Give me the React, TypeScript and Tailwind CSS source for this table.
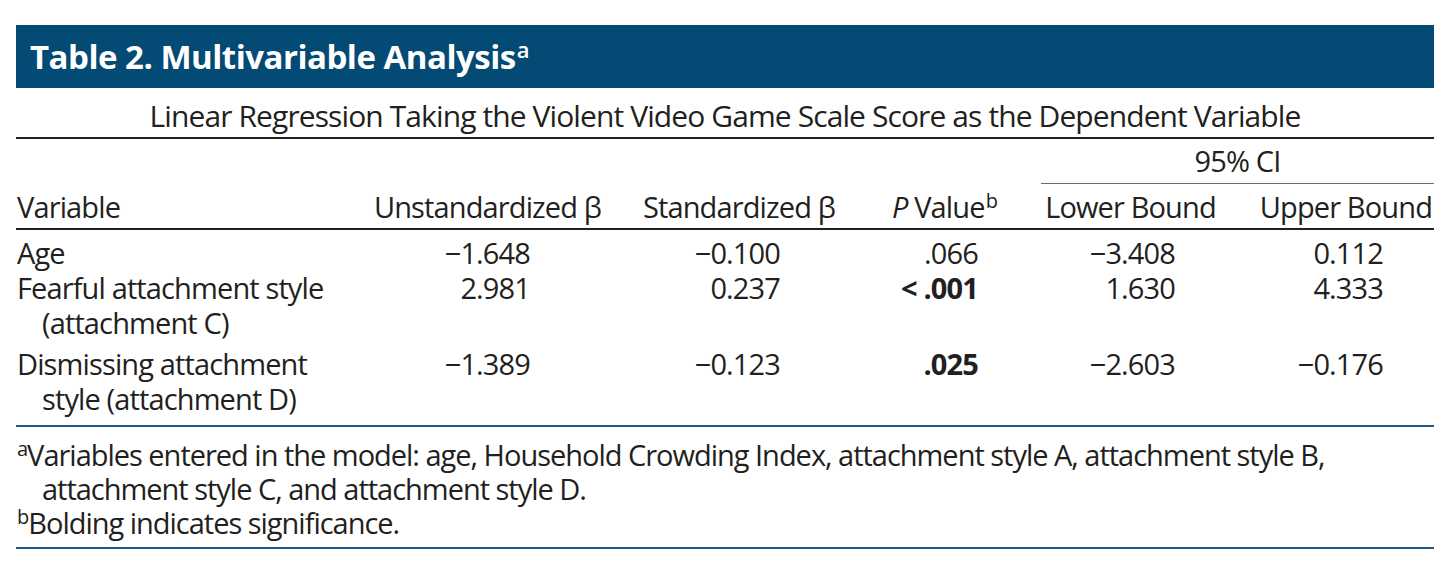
import clsx from "clsx"

const ink = "text-[#231f20]"

const rows = [
  {
    label: ["Age"],
    values: ["−1.648", "−0.100", ".066", "−3.408", "0.112"],
    bold: false
  },
  {
    label: ["Fearful attachment style", "(attachment C)"],
    values: ["2.981", "0.237", "< .001", "1.630", "4.333"],
    bold: true
  },
  {
    label: ["Dismissing attachment", "style (attachment D)"],
    values: ["−1.389", "−0.123", ".025", "−2.603", "−0.176"],
    bold: true
  }
]

// right padding per numeric column so the figures line up like the print
const numPad = ["pr-[85px]", "pr-[83px]", "pr-[48px]", "pr-[60px]", "pr-[51px]"]

const App = () => {
  return (
    <div
      className={clsx("w-[1446px] h-[564px] bg-white pt-[25px] pl-[16px]", ink)}
      style={{ fontFamily: '"Open Sans", "Noto Sans", sans-serif' }}
    >
      <div className="w-[1418px]">
        <div className="h-[63px] bg-[#034a74] pl-[14px] flex items-center text-white font-bold text-[33px] tracking-[-0.015em]">
          <span>
            Table 2. Multivariable Analysis
            <sup className="text-[22px] font-semibold ml-[1px] tracking-normal">a</sup>
          </span>
        </div>

        <div className="pt-[10px] pb-[4px] leading-[35px] text-[30px] text-center tracking-[-0.03em] border-b-2 border-[#231f20]">
          Linear Regression Taking the Violent Video Game Scale Score as the Dependent Variable
        </div>

        <div className="grid grid-cols-[344px_255px_248px_163px_209px_199px] text-[29px] leading-[35px] tracking-[-0.03em]">
          {/* header row 1 */}
          <div className="col-start-5 col-span-2 ml-[15px] pt-[4px] pb-[5px] text-center border-b border-[#6b6b6b]">
            95% CI
          </div>

          {/* header row 2 */}
          <div className="col-start-1 pl-px pt-[5px] pb-[4px] border-b-2 border-[#231f20]">Variable</div>
          <div className="pt-[5px] pb-[4px] text-center border-b-2 border-[#231f20]">Unstandardized β</div>
          <div className="pt-[5px] pb-[4px] text-center border-b-2 border-[#231f20]">Standardized β</div>
          <div className="pt-[5px] pb-[4px] text-center border-b-2 border-[#231f20]">
            <i>P</i> Value<sup className="text-[20px] ml-[1px]">b</sup>
          </div>
          <div className="pt-[5px] pb-[4px] text-center border-b-2 border-[#231f20]">Lower Bound</div>
          <div className="pt-[5px] pb-[4px] text-right pr-[2px] border-b-2 border-[#231f20]">Upper Bound</div>

          {/* body */}
          {rows.map((row, i) => (
            <div key={i} className="contents">
              <div
                className={clsx(
                  "pl-[26px] -indent-[25px]",
                  i === 0 && "pt-[5px]",
                  i === 2 && "pt-[6px]",
                  i === 2 && "pb-[9px] border-b-2 border-[#1f5a8b]"
                )}
              >
                {row.label[0]}
                {row.label[1] && (
                  <>
                    <br />
                    {row.label[1]}
                  </>
                )}
              </div>
              {row.values.map((v, j) => (
                <div
                  key={j}
                  className={clsx(
                    "text-right",
                    numPad[j],
                    i === 0 && "pt-[5px]",
                    i === 2 && "pt-[6px]",
                    i === 2 && "pb-[9px] border-b-2 border-[#1f5a8b]",
                    j === 2 && row.bold && "font-bold"
                  )}
                >
                  {v}
                </div>
              ))}
            </div>
          ))}
        </div>

        <div className="pt-[11px] pb-[7px] text-[29px] leading-[34px] tracking-[-0.035em] border-b-2 border-[#1f5a8b]">
          <div className="pl-[26px] -indent-[25px]">
            <sup className="text-[20px]">a</sup>Variables entered in the model: age, Household Crowding Index, attachment style A, attachment style B,
            <br />
            attachment style C, and attachment style D.
          </div>
          <div className="pl-[1px]">
            <sup className="text-[20px]">b</sup>Bolding indicates significance.
          </div>
        </div>
      </div>
    </div>
  )
}

export default App
